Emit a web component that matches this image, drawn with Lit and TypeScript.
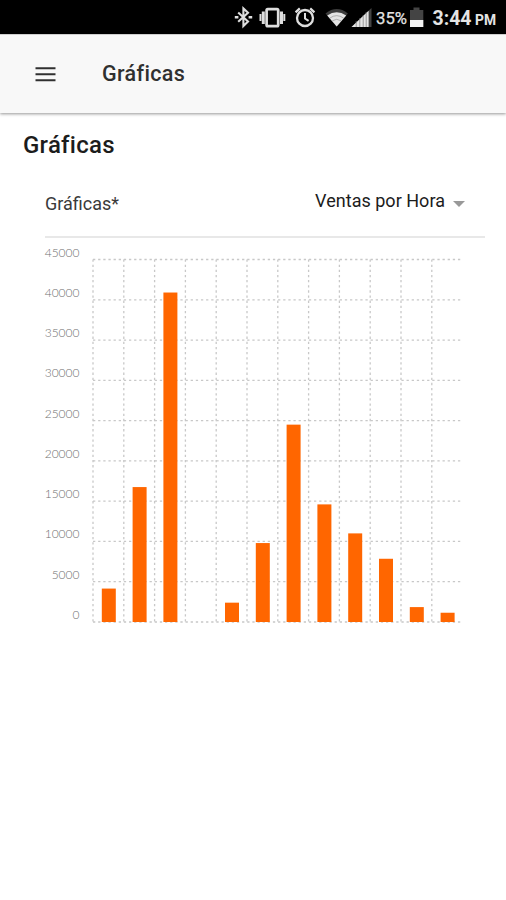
import { LitElement, html, svg, css } from "lit";
import { customElement, property } from "lit/decorators.js";

const SALES = [4150, 16750, 40900, 0, 2400, 9800, 24500, 14600, 11000, 7850, 1850, 1150];
const MAX = 45000;
const STEP = 5000;

@customElement("status-bar")
class StatusBar extends LitElement {
  static styles = css`
    :host {
      display: block;
      height: 34px;
      background: #000;
      color: #e4e4e4;
    }
    .bar {
      display: flex;
      height: 34px;
      justify-content: flex-end;
    }
    svg {
      display: block;
      width: 280px;
      height: 34px;
    }
    text {
      font-family: Roboto, sans-serif;
      fill: #e4e4e4;
    }
    .battery {
      font-size: 17px;
      font-weight: 400;
      stroke: #e4e4e4;
      stroke-width: 0.25;
    }
    .clock {
      font-size: 20px;
      font-weight: 700;
    }
    .period {
      font-size: 14.5px;
      font-weight: 700;
    }
  `;

  render() {
    return html`<div class="bar">
      <svg viewBox="226 0 280 34">
        <g fill="none" stroke="#dedede" stroke-width="2.1">
          <path d="M238.2 12.6l9.8 9-4.6 4.4V8.5l4.6 4.3-9.8 9" />
          <path d="M234.8 17.3h3.6M248.6 17.3h3.6" stroke-width="2.4" />
        </g>
        <g fill="none" stroke="#dedede">
          <rect x="266.6" y="9.2" width="11.6" height="17" rx="1.2" stroke-width="2.7" />
          <path d="M263.3 11.5v12.5M281.5 11.5v12.5" stroke-width="3" />
          <path d="M260.5 14v7M284.3 14v7" stroke-width="2" />
        </g>
        <g fill="none" stroke="#dedede">
          <circle cx="305" cy="18" r="8" stroke-width="2.3" />
          <path d="M305 13v5.5l3.6 2.4" stroke-width="2" />
          <path d="M295.6 12.3l4.2-4M310.2 8.3l4.2 4" stroke-width="2.3" />
        </g>
        <path d="M325.5 13.4q11.2-8.6 22.4 0L336.7 26.6z" fill="#3c3c3c" />
        <path d="M327.2 15.5q9.5-6.4 19 0L336.7 26.6z" fill="#e4e4e4" />
        <path d="M329.8 18.1q6.9-4.9 13.8 0M332.3 20.8q4.4-3 8.8 0" fill="none" stroke="#888" stroke-width=".6" />
        <path d="M371.5 8v19h-20z" fill="#444" />
        <path d="M368.6 10.8V27h-17.1z" fill="#e4e4e4" />
        <path d="M356.2 21v6M359.8 18v9M363.2 15v12M366.2 12v15" stroke="#777" stroke-width=".7" />
        <text class="battery" x="376" y="24" textLength="31" lengthAdjust="spacingAndGlyphs">35%</text>
        <path d="M410 10h3.5V7.5h6V10h3.8v17H410z" fill="#444" />
        <path d="M410 20h13.3v7H410z" fill="#f2f2f2" />
        <text class="clock" x="432.5" y="25" textLength="39" lengthAdjust="spacingAndGlyphs">3:44</text>
        <text class="period" x="475" y="25" textLength="21" lengthAdjust="spacingAndGlyphs">PM</text>
      </svg>
    </div>`;
  }
}

@customElement("bar-chart")
class BarChart extends LitElement {
  @property({ attribute: false }) values: number[] = [];

  static styles = css`
    :host {
      display: block;
    }
    svg {
      display: block;
      width: 506px;
      height: 400px;
    }
    .grid {
      stroke: #c8c8c8;
      stroke-width: 1.3;
      stroke-dasharray: 2.3 2.84;
    }
    .tick {
      font: 300 12px Lato, sans-serif;
      fill: #707070;
      text-anchor: end;
    }
    .column {
      fill: #ff6600;
    }
  `;

  render() {
    const left = 93;
    const top = 21.5;
    const bottom = 384;
    const colWidth = 30.8;
    const right = left + colWidth * 12;
    const y = (v: number) => bottom - (v / MAX) * (bottom - top);
    const ticks = Array.from({ length: MAX / STEP + 1 }, (_, i) => i * STEP);
    return html`<svg viewBox="0 0 506 400">
      ${ticks.map(
        (t) => svg`<line class="grid" x1=${left} x2=${right} y1=${y(t)} y2=${y(t)}></line>
          <text class="tick" x="79.5" y=${y(t) - 3}>${t}</text>`
      )}
      ${this.values.map((v, i) => {
        const x = left + i * colWidth;
        return svg`<line class="grid" x1=${x} x2=${x} y1=${top} y2=${bottom}></line>
          <rect class="column" x=${x + 8.8} y=${y(v)} width="14" height=${bottom - y(v)}></rect>`;
      })}
    </svg>`;
  }
}

@customElement("app-root")
class AppRoot extends LitElement {
  static styles = css`
    :host {
      display: block;
      height: 900px;
      overflow: hidden;
      background: #fff;
      color: #1c1c1c;
      font-family: Roboto, sans-serif;
    }
    .toolbar {
      display: flex;
      align-items: center;
      box-sizing: border-box;
      height: 79px;
      padding: 0 0 1px 35px;
      background: #f8f8f8;
      border-top: 1px solid #cfcfcf;
      box-shadow: 0 1px 3px rgba(0, 0, 0, 0.42);
    }
    .menu {
      display: block;
      width: 21px;
      height: 16px;
      margin-right: 46px;
    }
    .title {
      font-size: 21.5px;
      font-weight: 500;
      line-height: 28px;
      padding-top: 1px;
      color: #303030;
      letter-spacing: 0.35px;
    }
    h1 {
      margin: 0;
      padding: 17px 0 0 23px;
      font-size: 24px;
      font-weight: 500;
      line-height: 30px;
      letter-spacing: 0.25px;
    }
    .field {
      display: flex;
      align-items: center;
      justify-content: space-between;
      box-sizing: border-box;
      height: 67px;
      margin: 11px 21px 0 45px;
      border-bottom: 2px solid #e8e8e8;
    }
    .label {
      font-size: 18px;
      line-height: 24px;
      color: #3a3a3a;
      padding-top: 1px;
    }
    .choice {
      display: flex;
      align-items: center;
      padding: 0 20px 5px 0;
      font-size: 18px;
      line-height: 24px;
      letter-spacing: 0.02px;
    }
    .caret {
      display: block;
      width: 12px;
      height: 6px;
      margin: 5px 0 0 8px;
    }
  `;

  render() {
    return html`
      <status-bar></status-bar>
      <div class="toolbar">
        <svg class="menu" viewBox="0 0 21 16">
          <path d="M.5 2.3h20M.5 8.3h20M.5 14.2h20" stroke="#303030" stroke-width="2" />
        </svg>
        <span class="title">Gráficas</span>
      </div>
      <h1>Gráficas</h1>
      <div class="field">
        <span class="label">Gráficas*</span>
        <span class="choice">
          Ventas por Hora
          <svg class="caret" viewBox="0 0 12 6"><path d="M0 0h12L6 6z" fill="#999" /></svg>
        </span>
      </div>
      <bar-chart .values=${SALES}></bar-chart>
    `;
  }
}
